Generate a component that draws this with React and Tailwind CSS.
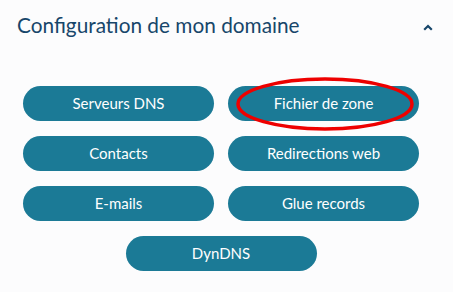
import React from "react";

function Btn({ children }) {
  return (
    <button className="h-[35px] w-[191px] rounded-full bg-[#1b7a96] text-white text-[15px] leading-none">
      {children}
    </button>
  );
}

export default function App() {
  return (
    <div className="w-[453px] h-[292px] bg-[#fcfcfd] relative overflow-hidden" style={{ fontFamily: "Lato, 'Open Sans', sans-serif" }}>
      <div className="flex items-center justify-between pl-[17px] pr-[20px] pt-[11px]">
        <h2 className="text-[20.8px] leading-[28px] text-[#17466a]">Configuration de mon domaine</h2>
        <svg width="10" height="7" viewBox="0 0 10 7" className="mt-[4px]">
          <path d="M1.2 5.8 L5 2 L8.8 5.8" fill="none" stroke="#17466a" strokeWidth="2.2" />
        </svg>
      </div>
      <div className="pl-[23px] pt-[47px] flex flex-col items-start gap-[15px]">
        <div className="grid grid-cols-[191px_191px] gap-x-[14px] gap-y-[15px]">
          <Btn>Serveurs DNS</Btn>
          <Btn>Fichier de zone</Btn>
          <Btn>Contacts</Btn>
          <Btn>Redirections web</Btn>
          <Btn>E-mails</Btn>
          <Btn>Glue records</Btn>
        </div>
        <div className="w-[396px] flex justify-center">
          <Btn>DynDNS</Btn>
        </div>
      </div>
      <svg className="absolute left-[235px] top-[76px]" width="180" height="56" viewBox="0 0 180 56">
        <ellipse cx="90" cy="28" rx="87" ry="25" fill="none" stroke="#ee0000" strokeWidth="3.5" />
      </svg>
    </div>
  );
}
